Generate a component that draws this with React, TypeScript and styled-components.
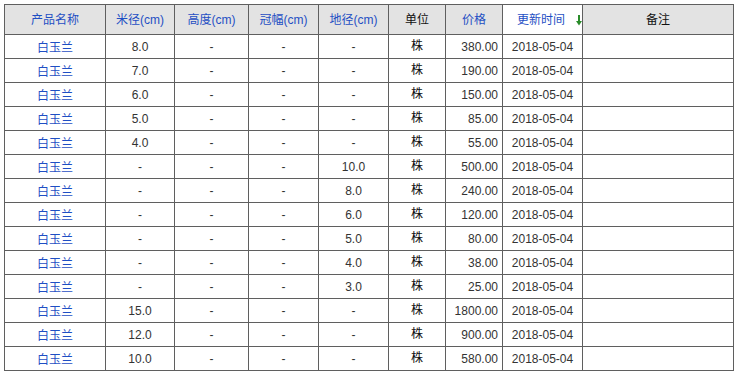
import React from "react";
import styled, { createGlobalStyle } from "styled-components";

const Global = createGlobalStyle`
  html, body { margin: 0; padding: 0; background: #ffffff; }
  body { padding: 4px; font-family: "Liberation Sans", Arial, "Noto Sans CJK SC", sans-serif; font-size: 12px; color: #333; }
`;

const Table = styled.table`
  border-collapse: collapse;
  table-layout: fixed;
  width: 730px;
  border: 1px solid #5f5f5f;
`;

const HeadRow = styled.tr`
  height: 30px;
`;

const Th = styled.th<{ $active?: boolean; $plain?: boolean }>`
  border: 1px solid #5f5f5f;
  background: ${(p) => (p.$active ? "#ffffff" : "#e3e3e3")};
  color: ${(p) => (p.$plain ? "#111" : "#1f4fc4")};
  font-weight: normal;
  font-size: 12px;
  text-align: center;
  padding: ${(p) => (p.$active ? "0 0 3px 14px" : "0 0 3px")};
  white-space: nowrap;
`;

const ArrowIcon = styled.svg`
  display: inline-block;
  vertical-align: -2px;
  margin-left: 11px;
`;

const Row = styled.tr`
  height: 24px;
`;

const Td = styled.td<{ $align?: "center" | "right"; $link?: boolean; $unit?: boolean }>`
  border: 1px solid #5f5f5f;
  text-align: ${(p) => p.$align ?? "center"};
  color: ${(p) => (p.$link ? "#1f4fc4" : p.$unit ? "#111" : "#333")};
  padding: ${(p) => (p.$unit ? "0 0 4px" : p.$align === "right" ? "0 4px 0 0" : "0")};
  font-size: 12px;
  white-space: nowrap;
`;

const widths = [101, 69, 74, 70, 70, 57, 57, 80, 151];

type Item = [string, string, string, string, string];
const rows: Item[] = [
  ["8.0", "-", "-", "-", "380.00"],
  ["7.0", "-", "-", "-", "190.00"],
  ["6.0", "-", "-", "-", "150.00"],
  ["5.0", "-", "-", "-", "85.00"],
  ["4.0", "-", "-", "-", "55.00"],
  ["-", "-", "-", "10.0", "500.00"],
  ["-", "-", "-", "8.0", "240.00"],
  ["-", "-", "-", "6.0", "120.00"],
  ["-", "-", "-", "5.0", "80.00"],
  ["-", "-", "-", "4.0", "38.00"],
  ["-", "-", "-", "3.0", "25.00"],
  ["15.0", "-", "-", "-", "1800.00"],
  ["12.0", "-", "-", "-", "900.00"],
  ["10.0", "-", "-", "-", "580.00"],
];

function SortDown() {
  return (
    <ArrowIcon width="6" height="11" viewBox="0 0 6 11">
      <rect x="2" y="0" width="2" height="7" fill="#2a8c2a" />
      <polygon points="0,6 6,6 3,10.5" fill="#2a8c2a" />
    </ArrowIcon>
  );
}

export default function App() {
  return (
    <>
      <Global />
      <Table>
        <colgroup>
          {widths.map((w, i) => (
            <col key={i} style={{ width: w }} />
          ))}
        </colgroup>
        <thead>
          <HeadRow>
            <Th>产品名称</Th>
            <Th>米径(cm)</Th>
            <Th>高度(cm)</Th>
            <Th>冠幅(cm)</Th>
            <Th>地径(cm)</Th>
            <Th $plain>单位</Th>
            <Th>价格</Th>
            <Th $active>
              更新时间
              <SortDown />
            </Th>
            <Th $plain>备注</Th>
          </HeadRow>
        </thead>
        <tbody>
          {rows.map((r, i) => (
            <Row key={i}>
              <Td $link>白玉兰</Td>
              <Td>{r[0]}</Td>
              <Td>{r[1]}</Td>
              <Td>{r[2]}</Td>
              <Td>{r[3]}</Td>
              <Td $unit>株</Td>
              <Td $align="right">{r[4]}</Td>
              <Td>2018-05-04</Td>
              <Td></Td>
            </Row>
          ))}
        </tbody>
      </Table>
    </>
  );
}
